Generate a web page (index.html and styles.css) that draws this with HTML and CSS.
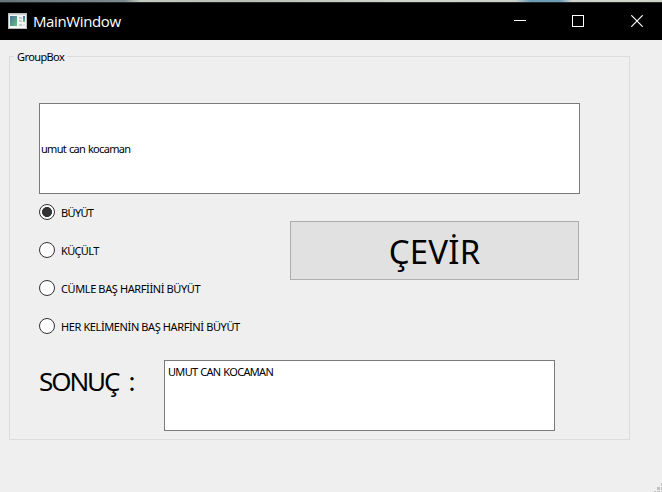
FILE: index.html
```
<!DOCTYPE html>
<html lang="tr">
<head>
<meta charset="utf-8">
<title>MainWindow</title>
<link rel="stylesheet" href="styles.css">
</head>
<body>
<div class="desktop-strip"></div>
<header class="titlebar">
  <svg class="app-icon" width="19" height="16" viewBox="0 0 19 16">
    <defs>
      <linearGradient id="pane" x1="0" y1="0" x2="1" y2="1"><stop offset="0" stop-color="#4773a0"/><stop offset="1" stop-color="#5fc07a"/></linearGradient>
      <linearGradient id="bar" x1="0" y1="0" x2="0" y2="1"><stop offset="0" stop-color="#3d6fb0"/><stop offset="1" stop-color="#62c878"/></linearGradient>
    </defs>
    <rect x=".5" y=".5" width="18" height="15" fill="#f4f4f4" stroke="#b9bcbd"/>
    <rect x="1" y="1" width="17" height="1" fill="#d0d4d6"/>
    <rect x="2" y="3" width="7" height="10" fill="url(#pane)"/>
    <path d="M11 4h3v2h-3zM11 7h3v2h-3zM11 11h3v2h-3z" fill="#c8cacb"/>
    <rect x="15" y="3" width="2" height="6" fill="url(#bar)"/>
    <path d="M15 11h2v2h-2z" fill="#dcdcdc"/>
  </svg>
  <h1 class="title">MainWindow</h1>
  <div class="controls">
    <svg width="12" height="12" viewBox="0 0 12 12"><path d="M0 5.5h12"/></svg>
    <svg width="12" height="12" viewBox="0 0 12 12"><path d="M.5.5h11v11H.5z" shape-rendering="crispEdges"/></svg>
    <svg width="12" height="12" viewBox="0 0 12 12"><path d="M.3.3l11.4 11.4M11.7.3L.3 11.7" stroke-width="1.2"/></svg>
  </div>
</header>
<main class="group">
  <span class="legend">GroupBox</span>
  <div class="line-edit">umut can kocaman</div>
  <div class="middle">
    <div class="radios">
      <div class="radio"><i class="dot checked"></i><span class="short">BÜYÜT</span></div>
      <div class="radio"><i class="dot"></i><span class="short">KÜÇÜLT</span></div>
      <div class="radio"><i class="dot"></i><span>CÜMLE BAŞ HARFİİNİ BÜYÜT</span></div>
      <div class="radio"><i class="dot"></i><span>HER KELİMENİN BAŞ HARFİNİ BÜYÜT</span></div>
    </div>
    <button class="convert">ÇEVİR</button>
  </div>
  <div class="result">
    <span class="result-label">SONUÇ :</span>
    <div class="output">UMUT CAN KOCAMAN</div>
  </div>
</main>
<svg class="grip" width="8" height="9" viewBox="0 0 8 9"><path d="M7 0h1v3H7zM3 4h3v3H3zM7 4h1v3H7zM0 8h2v1H0zM3 8h3v1H3zM7 8h1v1H7z" fill="#bfbfbf"/></svg>
</body>
</html>
```
FILE: styles.css
```
* { box-sizing: border-box; }
body {
  margin: 0;
  width: 662px;
  height: 492px;
  overflow: hidden;
  background: #efefef;
  color: #000;
  font: 11px/14px "Noto Sans", sans-serif;
  letter-spacing: -.68px;
  word-spacing: .6px;
  white-space: nowrap;
}
.desktop-strip {
  height: 2px;
  background: linear-gradient(90deg, #66757b 0, #7b8b8e 125px, #c5c9bf 140px, #b9c0b8 250px, #d2d5cb 400px, #cdd2c9 515px, #6d9db5 530px, #6d9db5 560px, #cfd3c9 572px, #d0d4c8 100%);
}
.titlebar {
  display: flex;
  align-items: flex-start;
  height: 38px;
  padding: 0 19px 0 8px;
  background: #000;
  border-top: 1px solid #25292b;
  color: #fff;
}
.app-icon { margin-top: 10px; }
.title {
  margin: 8px 0 0 6px;
  font: 15px/20px "Open Sans", sans-serif;
  letter-spacing: -.37px;
}
.controls { display: flex; gap: 46px; margin-left: auto; margin-top: 12px; }
.controls svg { fill: none; stroke: #fff; }
.controls svg:last-child { margin-left: 1px; }
.group {
  width: 621px;
  height: 384px;
  margin: 16px 0 0 9px;
  padding: 0 0 0 29px;
  border: 1px solid #dcdcdc;
}
.legend {
  display: block;
  width: 53px;
  height: 14px;
  margin: -7px 0 0 -25px;
  padding-left: 3px;
  background: #efefef;
  letter-spacing: -.6px;
}
.line-edit {
  display: flex;
  align-items: center;
  width: 541px;
  height: 91px;
  margin-top: 39px;
  padding-left: 1px;
  background: #fff;
  border: 1px solid #7a7a7a;
}
.middle { display: flex; margin-top: 10px; height: 130px; }
.radios { display: flex; flex-direction: column; gap: 22px; width: 251px; }
.radio { display: flex; align-items: center; height: 16px; gap: 6px; letter-spacing: -.39px; word-spacing: 0; }
.radio span { margin-top: 2px; }
.radio .short { letter-spacing: -.65px; }
.dot { width: 16px; height: 16px; border: 1px solid #333; border-radius: 50%; background: #fff; }
.checked { background: radial-gradient(circle, #333 4.7px, #fff 5.3px); }
.convert {
  width: 289px;
  height: 59px;
  margin: 17px 0 0;
  padding: 2px 0 0;
  background: #e1e1e1;
  border: 1px solid #adadad;
  color: #000;
  font: 33px/40px "Noto Sans", sans-serif;
  letter-spacing: .2px;
}
.result { display: flex; margin-top: 26px; }
.result-label { width: 125px; padding-top: 3px; font-size: 26px; line-height: 36px; letter-spacing: -2.1px; word-spacing: 5.5px; }
.output {
  width: 391px;
  height: 71px;
  padding: 4px 3px;
  background: #fff;
  border: 1px solid #7a7a7a;
}
.grip { position: absolute; right: 0; bottom: 0; }
```
